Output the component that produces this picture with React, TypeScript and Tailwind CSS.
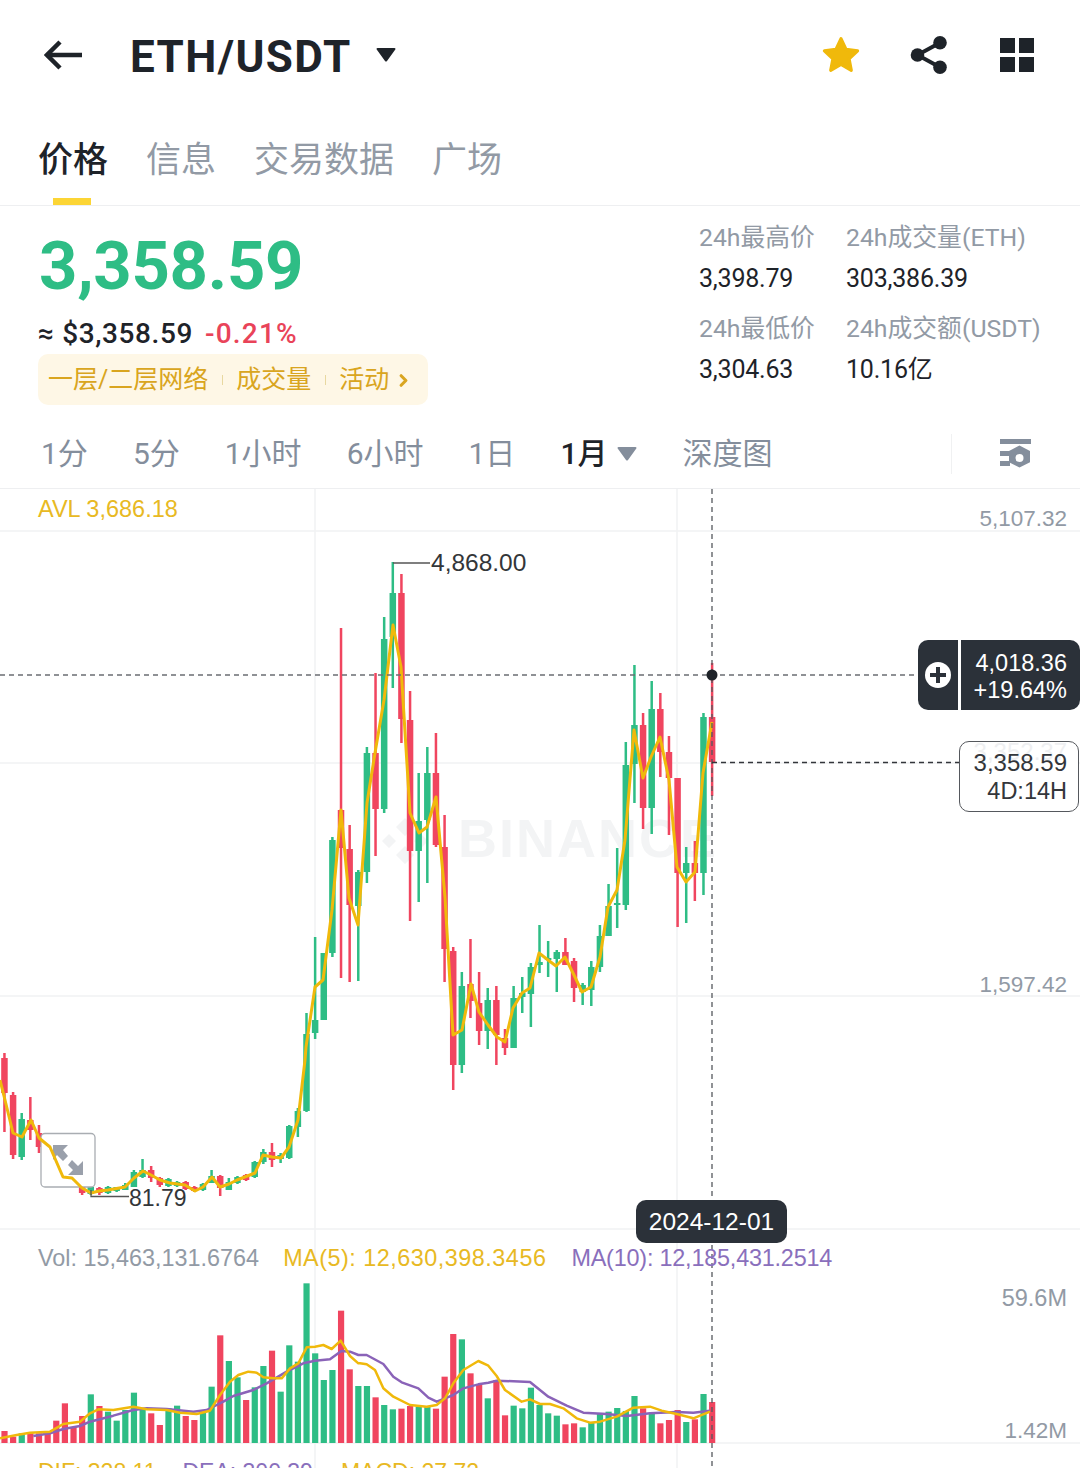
import { ChevronRight } from "lucide-react";

type Candle = [number, "g" | "r", number, number, number, number];

const GREEN = "#2EBD85";
const RED = "#F0455F";
const YELLOW = "#F0B90B";
const PURPLE = "#8A63B8";

const barX = (i: number) => 4.4 + 8.63 * i;

// [index, colour, wick top, body top, body bottom, wick bottom]
const candles: Candle[] = [
  [0, "r", 1053, 1058, 1093, 1132],
  [1, "r", 1092, 1095, 1155, 1159],
  [2, "g", 1113, 1119, 1157, 1160],
  [3, "r", 1097, 1120, 1130, 1140],
  [4, "r", 1125, 1133, 1147, 1153],
  [9, "r", 1186, 1187, 1193, 1195],
  [10, "g", 1186, 1187, 1194, 1195],
  [11, "r", 1187, 1188, 1193, 1195],
  [12, "g", 1186, 1187, 1193, 1194],
  [13, "g", 1187, 1187, 1191, 1192],
  [14, "g", 1183, 1185, 1190, 1190],
  [15, "g", 1170, 1172, 1187, 1187],
  [16, "g", 1159, 1170, 1177, 1178],
  [17, "r", 1166, 1170, 1178, 1182],
  [18, "r", 1177, 1178, 1185, 1187],
  [19, "g", 1178, 1179, 1186, 1187],
  [20, "g", 1181, 1182, 1186, 1187],
  [21, "r", 1181, 1182, 1189, 1190],
  [22, "r", 1186, 1187, 1191, 1192],
  [23, "g", 1183, 1184, 1190, 1191],
  [24, "g", 1170, 1176, 1183, 1183],
  [25, "r", 1175, 1176, 1188, 1196],
  [26, "g", 1178, 1182, 1190, 1190],
  [27, "g", 1176, 1177, 1183, 1184],
  [28, "r", 1174, 1175, 1180, 1181],
  [29, "g", 1161, 1162, 1177, 1178],
  [30, "g", 1149, 1152, 1162, 1164],
  [31, "r", 1143, 1152, 1160, 1167],
  [32, "g", 1153, 1155, 1159, 1163],
  [33, "g", 1125, 1126, 1158, 1159],
  [34, "g", 1108, 1111, 1127, 1137],
  [35, "g", 1013, 1034, 1111, 1112],
  [36, "g", 937, 1020, 1033, 1039],
  [37, "g", 953, 953, 1020, 1020],
  [38, "g", 837, 840, 953, 957],
  [39, "r", 628, 810, 848, 978],
  [40, "r", 825, 849, 905, 982],
  [41, "g", 870, 872, 906, 981],
  [42, "g", 747, 753, 872, 883],
  [43, "r", 673, 753, 809, 856],
  [44, "g", 617, 639, 809, 813],
  [45, "g", 562, 593, 637, 688],
  [46, "r", 574, 593, 719, 743],
  [47, "r", 691, 720, 851, 921],
  [48, "g", 773, 821, 851, 902],
  [49, "g", 747, 773, 820, 883],
  [50, "r", 733, 773, 845, 847],
  [51, "r", 815, 847, 949, 982],
  [52, "r", 947, 951, 1065, 1090],
  [53, "g", 972, 986, 1065, 1073],
  [54, "r", 939, 984, 1001, 1018],
  [55, "r", 972, 1003, 1031, 1045],
  [56, "g", 988, 1000, 1031, 1049],
  [57, "r", 986, 1000, 1035, 1065],
  [58, "r", 1029, 1038, 1048, 1055],
  [59, "g", 986, 998, 1048, 1048],
  [60, "g", 977, 993, 997, 1013],
  [61, "g", 963, 967, 994, 1027],
  [62, "g", 925, 962, 965, 973],
  [63, "g", 941, 958, 960, 977],
  [64, "g", 950, 952, 959, 992],
  [65, "r", 938, 952, 965, 965],
  [66, "r", 958, 961, 988, 1002],
  [67, "g", 983, 985, 992, 1005],
  [68, "g", 961, 967, 990, 1006],
  [69, "g", 925, 936, 967, 972],
  [70, "g", 884, 906, 936, 936],
  [71, "g", 848, 903, 904, 928],
  [72, "g", 742, 765, 905, 910],
  [73, "g", 665, 725, 764, 803],
  [74, "r", 713, 725, 808, 829],
  [75, "g", 681, 709, 808, 834],
  [76, "r", 693, 709, 752, 777],
  [77, "r", 736, 752, 778, 835],
  [78, "r", 778, 778, 873, 927],
  [79, "g", 847, 863, 873, 923],
  [80, "r", 841, 863, 873, 901],
  [81, "g", 713, 717, 873, 895],
  [82, "r", 663, 717, 762, 796],
];

const priceMa =
  "0,1080 5,1100 13,1133 22,1137 31,1120 39,1138 50,1147 63,1177 72,1178 82,1188 91,1193 99,1191 108,1190 125,1187 134,1178 143,1171 151,1175 160,1180 170,1183 185,1185 195,1191 203,1187 212,1177 220,1187 229,1184 237,1180 255,1173 263,1155 272,1157 281,1158 289,1147 298,1120 305,1060 306,1047 315,987 323,980 332,910 341,810 349,898 358,925 367,803 375,753 384,700 393,625 401,667 410,813 419,833 427,827 436,797 445,897 453,1035 462,1030 471,984 479,1012 488,1025 497,1037 505,1042 513,1008 522,993 530,988 539,953 548,960 556,966 565,957 574,975 582,992 591,987 600,957 608,907 617,890 625,840 634,730 643,778 651,757 660,737 669,780 677,867 686,882 695,872 703,773 712,722";

// vol bar tops: colour and height in the 3x crops, y = 1270 + v / 3
const volTops: ["g" | "r", number][] = [
  ["r", 483], ["r", 500], ["g", 490], ["r", 490], ["r", 490], ["r", 490], ["r", 452], ["r", 400], ["r", 472], ["r", 438],
  ["g", 373], ["r", 408], ["g", 425], ["g", 452], ["g", 420], ["g", 368], ["g", 415], ["r", 430], ["r", 465], ["g", 415],
  ["g", 407], ["r", 438], ["r", 450], ["g", 425], ["g", 350], ["r", 196], ["g", 273], ["g", 322], ["r", 390], ["g", 352],
  ["g", 288], ["r", 242], ["g", 365], ["g", 226], ["g", 275], ["g", 40], ["g", 250], ["g", 330], ["g", 300], ["r", 122],
  ["r", 298], ["g", 348], ["g", 348], ["r", 382], ["g", 405], ["g", 418], ["r", 416], ["r", 408], ["g", 410], ["g", 410],
  ["r", 416], ["r", 320], ["r", 192], ["g", 208], ["r", 310], ["r", 345], ["g", 385], ["r", 330], ["r", 436], ["g", 407],
  ["g", 415], ["g", 353], ["g", 405], ["g", 430], ["g", 437], ["r", 463], ["r", 460], ["g", 472], ["g", 458], ["g", 430],
  ["g", 425], ["g", 414], ["g", 423], ["g", 378], ["r", 415], ["g", 430], ["r", 460], ["r", 450], ["r", 420], ["g", 456],
  ["r", 448], ["g", 372], ["r", 396],
];

const toPoints = (pts: number[][], x0: number) =>
  pts.map(([x, y]) => `${x0 + x / 3},${1270 + y / 3}`).join(" ");

const volMa5 =
  toPoints(
    [[0, 505], [50, 495], [90, 488], [150, 485], [190, 462], [240, 455], [270, 430], [295, 418], [340, 420], [400, 410], [440, 418], [500, 420], [540, 428], [590, 432], [630, 422], [660, 375], [690, 335], [715, 315], [745, 305], [770, 308], [790, 322], [820, 325], [845, 325], [870, 295], [895, 280], [920, 232], [945, 230], [970, 225], [995, 237], [1022, 212], [1050, 258], [1075, 280]],
    0,
  ) +
  " " +
  toPoints(
    [[0, 280], [20, 283], [45, 300], [70, 355], [100, 380], [150, 405], [200, 410], [230, 405], [255, 385], [280, 340], [310, 300], [355, 273], [385, 287], [410, 318], [435, 360], [485, 395], [510, 388], [540, 402], [570, 402], [610, 415], [650, 445], [690, 458], [720, 455], [770, 440], [820, 413], [870, 410], [905, 422], [950, 432], [1000, 445], [1050, 425]],
    360,
  );

const volMa10 =
  toPoints(
    [[100, 498], [150, 490], [190, 477], [240, 468], [270, 455], [340, 437], [400, 420], [440, 415], [500, 417], [580, 425], [620, 420], [670, 395], [700, 378], [760, 360], [800, 340], [860, 305], [910, 280], [945, 272], [990, 268], [1024, 243], [1050, 245], [1075, 255]],
    0,
  ) +
  " " +
  toPoints(
    [[0, 255], [20, 255], [70, 282], [100, 320], [125, 337], [175, 355], [205, 383], [230, 395], [255, 385], [280, 375], [310, 355], [355, 343], [385, 338], [410, 332], [510, 336], [565, 380], [620, 407], [670, 428], [740, 432], [800, 438], [870, 430], [950, 426], [1000, 428], [1050, 422]],
    360,
  );

function Header() {
  return (
    <div className="flex h-[110px] items-center pl-[44px] pr-[46px]">
      <svg width="38" height="32" viewBox="0 0 38 32" fill="none" stroke="#1E2329" strokeWidth="4.5">
        <path d="M38 16H4" />
        <path d="M16 3 3 16l13 13" />
      </svg>
      <span className="ml-[48px] mt-[4px] text-[44px] font-bold leading-none tracking-[1.4px] text-[#1E2329]">ETH/USDT</span>
      <svg className="ml-[24px]" width="20" height="16" viewBox="0 0 20 16">
        <path d="M1.5 1h17a1 1 0 0 1 .8 1.6L11 14a1.3 1.3 0 0 1-2 0L.7 2.6A1 1 0 0 1 1.500 1z" fill="#1E2329" />
      </svg>
      <div className="ml-auto flex items-center">
        <svg width="42" height="42" viewBox="0 0 40 40">
          <path
            d="M20 4.500l4.800 10.200 11 1.300-8.100 7.600 2.100 11L20 28.900l-9.800 5.700 2.100-11-8.100-7.600 11-1.300z"
            fill={YELLOW}
            stroke={YELLOW}
            strokeWidth="3"
            strokeLinejoin="round"
          />
        </svg>
        <svg className="ml-[48px]" width="38" height="38" viewBox="0 0 38 38" fill="#1E2329">
          <circle cx="7.500" cy="19" r="6.800" />
          <circle cx="30" cy="6.800" r="6.800" />
          <circle cx="30" cy="31.200" r="6.800" />
          <path d="M7.500 19 30 6.800M7.500 19 30 31.200" stroke="#1E2329" strokeWidth="4" />
        </svg>
        <div className="ml-[52px] grid grid-cols-2 gap-[4px]">
          <div className="h-[15px] w-[15px] bg-[#1E2329]" />
          <div className="h-[15px] w-[15px] bg-[#1E2329]" />
          <div className="h-[15px] w-[15px] bg-[#1E2329]" />
          <div className="h-[15px] w-[15px] bg-[#1E2329]" />
        </div>
      </div>
    </div>
  );
}

function Tabs() {
  return (
    <div className="flex h-[96px] gap-[38px] border-b border-[#EEEFF1] pl-[38px] pt-[29px] text-[35px] leading-[44px] text-[#929AA5]">
      <div className="relative h-[66px] font-medium text-[#1E2329]">
        价格
        <div className="absolute bottom-0 left-[15px] h-[7px] w-[38px] bg-[#FCD535]" />
      </div>
      <div>信息</div>
      <div>交易数据</div>
      <div>广场</div>
    </div>
  );
}

function Stat({ label, value }: { label: string; value: string }) {
  return (
    <div className="whitespace-nowrap">
      <div className="text-[24.800px] leading-[30px] text-[#929AA5]">{label}</div>
      <div className="mt-[11px] text-[25px] leading-[30px] tracking-[-0.2px] text-[#1E2329]">{value}</div>
    </div>
  );
}

function Stats() {
  return (
    <div className="flex h-[213px]">
      <div className="pl-[38px]">
        <div className="ml-[1px] mt-[20px] text-[67px] font-bold leading-[80px] tracking-[-0.3px] text-[#2EBD85]">3,358.59</div>
        <div className="mt-[11px] flex h-[34px] items-center text-[28px] font-medium leading-none tracking-[0.6px] text-[#1E2329]">
          ≈ $3,358.59
          <span className="ml-[12px] tracking-[1.200px] text-[#E94359]">-0.21%</span>
        </div>
        <div className="mt-[3px] flex h-[51px] w-[390px] items-center rounded-[10px] bg-[#FEF7E6] pl-[10px] pt-[1px] text-[25px] text-[#D9A520]">
          一层/二层网络
          <div className="mx-[13.500px] h-[10px] w-[1px] bg-[#E8D8A0]" />
          成交量
          <div className="mx-[13.500px] h-[10px] w-[1px] bg-[#E8D8A0]" />
          活动
          <ChevronRight className="ml-[5px]" size={19} strokeWidth={4} />
        </div>
      </div>
      <div className="ml-auto mr-[39px] mt-[17px] grid h-fit w-[342px] grid-cols-[147px_1fr] gap-y-[20px]">
        <Stat label="24h最高价" value="3,398.79" />
        <Stat label="24h成交量(ETH)" value="303,386.39" />
        <Stat label="24h最低价" value="3,304.63" />
        <Stat label="24h成交额(USDT)" value="10.16亿" />
      </div>
    </div>
  );
}

function Timeframes() {
  return (
    <div className="flex h-[70px] items-center border-b border-[#EEEFF1] pl-[41px] pr-[48px] text-[30px] text-[#848E9C]">
      <div className="flex items-center gap-[45px]">
        <span>1分</span>
        <span>5分</span>
        <span>1小时</span>
        <span>6小时</span>
        <span>1日</span>
        <span className="flex items-center font-medium text-[#1E2329]">
          1月
          <svg className="ml-[10px]" width="20" height="14" viewBox="0 0 20 14">
            <path d="M1.500 0h17a1 1 0 0 1 .8 1.600L11 13a1.300 1.300 0 0 1-2 0L.7 1.600A1 1 0 0 1 1.500 0z" fill="#848E9C" />
          </svg>
        </span>
        <span>深度图</span>
      </div>
      <div className="ml-auto flex items-center">
        <div className="mr-[48px] h-[40px] w-[1px] bg-[#F0F1F2]" />
        <svg width="32" height="32" viewBox="0 0 32 32" fill="#848E9C">
          <rect x="0" y="1" width="31" height="5" />
          <rect x="0" y="13" width="10" height="5" />
          <rect x="0" y="23" width="10" height="5" />
          <path d="M19.500 9.500 30 15.500v12L19.500 33 9 27.500v-12z" transform="translate(0 -1.500) scale(1 .94)" />
          <circle cx="19.500" cy="20" r="4" fill="#fff" />
        </svg>
      </div>
    </div>
  );
}

function ChartDrawing() {
  return (
    <svg className="relative block" width="1080" height="979" viewBox="0 489 1080 979">
      <g stroke="#F1F2F3" strokeWidth="1.500">
        <path d="M0 531H1080M0 763H1080M0 996H1080M0 1229H1080M0 1443H1080" />
        <path d="M315 489V1468M677 489V1468" />
      </g>
      <g fill="#F3F4F5">
        <path d="M405 818l9 9-9 9-9-9zM389 834l7 7-7 7-7-7zM421 834l7 7-7 7-7-7zM405 846l9 9-9 9-9-9z" />
      </g>
      {candles.map(([i, c, wt, bt, bb, wb]) => (
        <g key={i} fill={c === "g" ? GREEN : RED}>
          <rect x={barX(i) - 1.2} y={wt} width="2.500" height={wb - wt} />
          <rect x={barX(i) - 3.2} y={bt} width="6.500" height={Math.max(bb - bt, 2)} />
        </g>
      ))}
      <rect x="41" y="1133.500" width="54" height="53.500" rx="4" fill="#fff" stroke="#A9ADB2" strokeWidth="1.300" />
      <path d="M53 1145h15l-5 5 5 6-5 5-6-6-4 5zM83 1175H68l5-5-5-5 4-5 6 6 5-5z" fill="#9AA0AB" />
      <polyline points={priceMa} fill="none" stroke={YELLOW} strokeWidth="3" strokeLinejoin="round" />
      <path d="M393 563H430M91 1190v6.500H129" fill="none" stroke="#555" strokeWidth="1.300" />
      {volTops.map(([c, v], i) => (
        <rect
          key={i}
          x={barX(i) - 3}
          y={1270 + v / 3}
          width="6.200"
          height={1443 - (1270 + v / 3)}
          fill={c === "g" ? GREEN : RED}
        />
      ))}
      <polyline points={volMa10} fill="none" stroke={PURPLE} strokeWidth="2.500" strokeLinejoin="round" />
      <polyline points={volMa5} fill="none" stroke={YELLOW} strokeWidth="2.500" strokeLinejoin="round" />
      <g fill="none" strokeWidth="1.300" strokeDasharray="5 4">
        <path d="M0 675H918" stroke="#6B6E73" />
        <path d="M712 489V1468" stroke="#55585D" />
        <path d="M712 762.500H959" stroke="#33363B" />
      </g>
      <circle cx="712" cy="675" r="5.500" fill="#1E2329" />
    </svg>
  );
}

function Chart() {
  const axis = "absolute right-[13px] text-[22.500px] leading-none text-[#929AA5]";
  return (
    <div className="relative h-[979px] overflow-hidden font-['Liberation_Sans',sans-serif]">
      <div className="absolute left-[458px] top-[322px] text-[54px] font-bold leading-[54px] tracking-[2px] text-[#F3F4F5]">
        BINANCE
      </div>
      <ChartDrawing />

      <div className="absolute left-[38px] top-[9px] text-[23.500px] leading-none text-[#E8B923]">AVL 3,686.18</div>
      <div className={`${axis} top-[19px]`}>5,107.32</div>
      <div className={`${axis} top-[485px]`}>1,597.42</div>
      <div className="absolute right-[13px] top-[798px] text-[23.500px] leading-none text-[#929AA5]">59.6M</div>
      <div className={`${axis} top-[931px]`}>1.42M</div>
      <div className="absolute left-[431px] top-[62px] text-[24.500px] leading-none text-[#333639]">4,868.00</div>
      <div className="absolute left-[129px] top-[698px] text-[23px] leading-none text-[#333639]">81.79</div>

      <div className="absolute left-[918px] top-[151px] flex h-[70px] w-[162px] rounded-[10px] bg-[#2B3139] text-white">
        <div className="flex w-[43px] items-center justify-center border-r-[3px] border-white">
          <svg width="28" height="28" viewBox="0 0 28 28">
            <circle cx="14" cy="14" r="13" fill="#fff" />
            <path d="M14 6v16M6 14h16" stroke="#2B3139" strokeWidth="4" />
          </svg>
        </div>
        <div className="flex-1 pr-[13px] pt-[10px] text-right text-[23.500px] leading-[27px]">
          <div>4,018.36</div>
          <div>+19.64%</div>
        </div>
      </div>

      <div className="absolute left-[959px] top-[252px] h-[71px] w-[120px] overflow-hidden rounded-[10px] border border-[#55585D] bg-white pr-[11px] pt-[7px] text-right text-[24px] leading-[28px] text-[#33363B]">
        <div className="absolute right-[11px] -top-[4px] text-[#EEEFF1]">3,352.37</div>
        <div className="relative">3,358.59</div>
        <div className="relative text-[23.500px]">4D:14H</div>
      </div>

      <div className="absolute left-[636px] top-[711px] flex h-[43px] w-[151px] items-center justify-center rounded-[10px] bg-[#2B3139] pt-[1px] text-[24.500px] text-white">
        2024-12-01
      </div>

      <div className="absolute left-[38px] top-[758px] flex whitespace-nowrap text-[23.400px] leading-none">
        <span className="text-[#929AA5]">Vol: 15,463,131.6764</span>
        <span className="ml-[24px] tracking-[0.5px] text-[#E8B923]">MA(5): 12,630,398.3456</span>
        <span className="ml-[25px] tracking-[-0.2px] text-[#8A6FBC]">MA(10): 12,185,431.2514</span>
      </div>
      <div className="absolute left-[38px] top-[972px] flex whitespace-nowrap text-[23px] leading-none">
        <span className="text-[#E8B923]">DIF: 328.11</span>
        <span className="ml-[26px] text-[#8A6FBC]">DEA: 300.39</span>
        <span className="ml-[28px] text-[#E8B923]">MACD: 27.72</span>
      </div>
    </div>
  );
}

export default function App() {
  return (
    <div className="h-[1468px] w-[1080px] overflow-hidden bg-white font-['Roboto','Noto_Sans_CJK_SC',sans-serif]">
      <Header />
      <Tabs />
      <Stats />
      <Timeframes />
      <Chart />
    </div>
  );
}
